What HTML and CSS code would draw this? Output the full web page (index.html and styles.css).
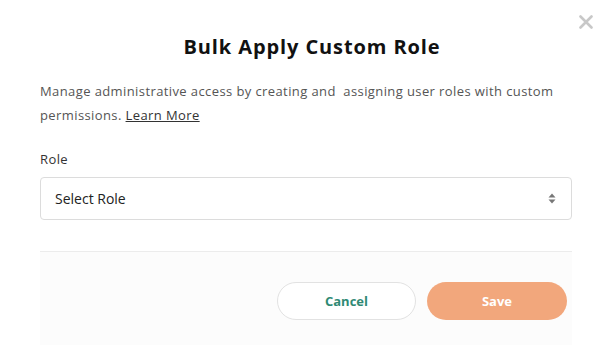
FILE: index.html
```html
<!DOCTYPE html>
<html>
<head>
<meta charset="utf-8">
<link rel="stylesheet" href="styles.css">
</head>
<body>
<div class="modal">
  <button class="close" aria-label="Close">
    <svg width="14" height="14" viewBox="0 0 14 14"><path d="M1.5 1.5L12.5 12.5M12.5 1.5L1.5 12.5" stroke="#c8c8c8" stroke-width="2.6" stroke-linecap="round"/></svg>
  </button>
  <div class="body">
    <h1 class="title">Bulk Apply Custom Role</h1>
    <p class="desc">Manage administrative access by creating and&nbsp; assigning user roles with custom permissions. <a href="#" class="link">Learn More</a></p>
    <label class="label">Role</label>
    <div class="select">
      <span>Select Role</span>
      <svg width="8" height="11" viewBox="0 0 8 11"><path d="M4 0.5L7.5 4.5H0.5Z M4 10.5L7.5 6.5H0.5Z" fill="#777"/></svg>
    </div>
  </div>
  <div class="footer">
    <button class="btn cancel">Cancel</button>
    <button class="btn save">Save</button>
  </div>
</div>
</body>
</html>
```
FILE: styles.css
```css
html, body { margin: 0; padding: 0; background: #fff; }
body { font-family: "Open Sans", "Liberation Sans", sans-serif; color: #222; }
.modal { position: relative; width: 613px; height: 345px; box-sizing: border-box; padding: 0 41px 0 40px; }
.close { position: absolute; top: 15px; right: 20px; border: 0; background: none; padding: 0; width: 14px; height: 14px; cursor: pointer; }
.close svg { display: block; }
.body { padding-top: 33px; border-bottom: 1px solid #ececec; padding-bottom: 31px; }
.title { margin: 0; padding-left: 12px; text-align: center; font-size: 20px; font-weight: 700; color: #111; line-height: 28px; letter-spacing: 0.9px; }
.desc { margin: 18px 0 0; font-size: 13px; line-height: 24px; color: #555; letter-spacing: 0.4px; }
.link { color: #333; text-decoration: underline; }
.label { display: block; margin-top: 24px; font-size: 13px; line-height: 16px; color: #333; letter-spacing: 0.4px; }
.select { margin-top: 10px; height: 43px; box-sizing: border-box; border: 1px solid #dcdcdc; border-radius: 4px; display: flex; align-items: center; justify-content: space-between; padding: 0 15px 0 14px; font-size: 14px; color: #222; }
.footer { background: #fcfcfc; height: 93px; display: flex; justify-content: flex-end; align-items: flex-start; gap: 11px; padding: 30px 5px 0 0; box-sizing: border-box; }
.btn { height: 38px; border-radius: 19px; font-family: inherit; font-size: 13px; font-weight: 700; cursor: pointer; }
.cancel { width: 139px; background: #fff; border: 1px solid #e2e2e2; color: #2f8a74; }
.save { width: 140px; background: #f2a77c; border: 0; color: #fff; }
```
